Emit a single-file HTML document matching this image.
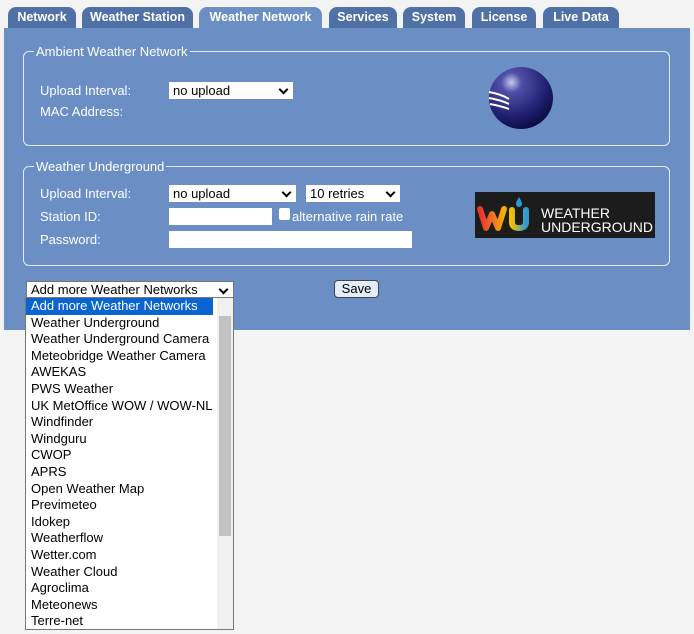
<!DOCTYPE html><html><head><style>
body{margin:0;width:694px;height:634px;background:#f3f3f3;font-family:"Liberation Sans",Arial,sans-serif;font-size:13px;position:relative;overflow:hidden}
.tab{position:absolute;top:7px;height:21px;background:#4f71a6;color:#fff;font-weight:bold;font-size:12.5px;line-height:21px;text-align:center;border-radius:8px 8px 0 0}
.tab.a{background:#6b8fc4}
#panel{position:absolute;left:4px;top:28px;width:686px;height:302px;background:#6b8fc4}
fieldset{position:absolute;border:1px solid #e6ecf5;border-radius:6px;margin:0;padding:0;color:#fff}
legend{font-size:13px;padding:0 2px;margin-left:10px;color:#fff}
.l{position:absolute;color:#fff;font-size:13px}
.sel{position:absolute;background:#fff;height:17px;font-size:13px;line-height:17px;padding-left:4px;box-sizing:border-box;color:#000}
.sel:after{content:"";position:absolute;right:6px;top:4px;width:5px;height:5px;border-right:2px solid #000;border-bottom:2px solid #000;transform:rotate(45deg)}
.inp{position:absolute;background:#fff;height:17px}
#list{position:absolute;left:25px;top:297px;width:209px;height:333px;background:#fff;border:1px solid #767676;box-sizing:border-box;font-size:13px;overflow:hidden}
#list div{height:16.6px;line-height:16.6px;padding-left:5px;width:187px;box-sizing:border-box;white-space:nowrap}
</style></head><body>
<div class="tab" style="left:8px;width:68px">Network</div>
<div class="tab" style="left:82px;width:111px">Weather Station</div>
<div class="tab a" style="left:199px;width:123px">Weather Network</div>
<div class="tab" style="left:329px;width:68px">Services</div>
<div class="tab" style="left:403px;width:62px">System</div>
<div class="tab" style="left:472px;width:64px">License</div>
<div class="tab" style="left:543px;width:76px">Live Data</div>
<div id="panel"></div>
<fieldset style="left:23px;top:44px;width:645px;height:100px"><legend>Ambient Weather Network</legend></fieldset>
<div class="l" style="left:40px;top:83px">Upload Interval:</div>
<div class="l" style="left:40px;top:104px">MAC Address:</div>
<div class="sel" style="left:169px;top:82px;width:124px">no upload</div>
<svg style="position:absolute;left:486px;top:66px" width="70" height="66"><defs><radialGradient id="g" cx="0.35" cy="0.25" r="0.8"><stop offset="0" stop-color="#c8c8f0"/><stop offset="0.2" stop-color="#5050a8"/><stop offset="0.7" stop-color="#1e1e6e"/><stop offset="1" stop-color="#0a0a40"/></radialGradient></defs><ellipse cx="35" cy="32" rx="32" ry="31" fill="url(#g)"/><g stroke="#fff" stroke-width="2" fill="none"><path d="M3 26 Q15 28 23 33"/><path d="M3 32 Q15 34 23 38"/><path d="M4 38 Q15 40 23 43"/></g></svg>
<fieldset style="left:23px;top:159px;width:645px;height:105px"><legend>Weather Underground</legend></fieldset>
<div class="l" style="left:40px;top:186px">Upload Interval:</div>
<div class="l" style="left:40px;top:209px">Station ID:</div>
<div class="l" style="left:40px;top:232px">Password:</div>
<div class="sel" style="left:169px;top:185px;width:127px">no upload</div>
<div class="sel" style="left:306px;top:185px;width:94px">10 retries</div>
<div class="inp" style="left:169px;top:208px;width:103px"></div>
<div class="inp" style="left:279px;top:208px;width:11px;height:12px;border-radius:2px"></div>
<div class="l" style="left:292px;top:209px">alternative rain rate</div>
<div class="inp" style="left:169px;top:231px;width:243px"></div>
<div style="position:absolute;left:475px;top:192px;width:180px;height:46px;background:#1c1c1c"></div>
<svg style="position:absolute;left:475px;top:192px" width="66" height="46"><defs><linearGradient id="w" x1="0" x2="1"><stop offset="0" stop-color="#e8332c"/><stop offset="0.6" stop-color="#f07a22"/><stop offset="1" stop-color="#f4b000"/></linearGradient><linearGradient id="u" x1="0" x2="1"><stop offset="0" stop-color="#f4c000"/><stop offset="1" stop-color="#2a9ad8"/></linearGradient></defs>
<path d="M5 17 L11 36 L17 22 L23 36 L29 17" stroke="url(#w)" stroke-width="6" fill="none" stroke-linejoin="round" stroke-linecap="round"/>
<path d="M37 18 L37 30 Q37 36 44 36 Q51 36 51 30 L51 18" stroke="url(#u)" stroke-width="6" fill="none" stroke-linecap="round"/>
<path d="M44 5 Q47 10 47 12 A3 3 0 0 1 41 12 Q41 10 44 5Z" fill="#2a9ad8"/></svg>
<div style="position:absolute;left:541px;top:206px;color:#fff;font-size:14px;line-height:14px">WEATHER<br>UNDERGROUND</div>
<div class="sel" style="left:26px;top:281px;width:208px;border:1px solid #767676;line-height:15px">Add more Weather Networks</div>
<div style="position:absolute;left:334px;top:280px;width:45px;height:18px;background:#e4ecf8;border:1px solid #445;border-radius:4px;box-sizing:border-box;text-align:center;line-height:16px;font-size:13px">Save</div>
<div id="list">
<div style="background:#0a64d2;color:#fff">Add more Weather Networks</div>
<div>Weather Underground</div><div>Weather Underground Camera</div><div>Meteobridge Weather Camera</div><div>AWEKAS</div><div>PWS Weather</div><div>UK MetOffice WOW / WOW-NL</div><div>Windfinder</div><div>Windguru</div><div>CWOP</div><div>APRS</div><div>Open Weather Map</div><div>Previmeteo</div><div>Idokep</div><div>Weatherflow</div><div>Wetter.com</div><div>Weather Cloud</div><div>Agroclima</div><div>Meteonews</div><div>Terre-net</div>
<span style="position:absolute;right:0;top:0;width:16px;height:331px;background:#f0f0f0"></span>
<span style="position:absolute;right:2px;top:18px;width:12px;height:220px;background:#c1c1c1"></span>
</div>
</body></html>
